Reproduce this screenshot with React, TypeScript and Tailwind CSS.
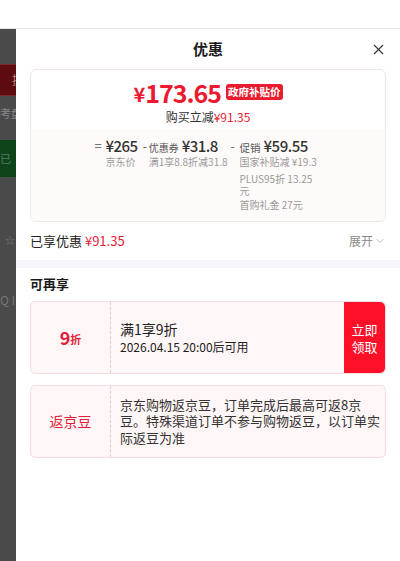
import { X, ChevronDown } from "lucide-react";

const FONT = { fontFamily: '"Noto Sans CJK SC", "Noto Sans", sans-serif' };

function Breakdown() {
  return (
    <div className="flex justify-center whitespace-nowrap bg-[#fffafa] pt-[8px] pb-[10px] text-[#333]">
      <div className="flex shrink-0">
        <span className="w-[11px] shrink-0 text-[13px] leading-[18px] text-[#555]">=</span>
        <div className="flex flex-col">
          <span className="h-[18px] text-[15px] font-medium leading-[18px] tracking-[-0.5px]">¥265</span>
          <span className="mt-[1px] text-[10px] leading-[12px] text-[#999]">京东价</span>
        </div>
      </div>
      <div className="ml-[5px] flex shrink-0">
        <span className="w-[6px] shrink-0 text-[12px] leading-[18px] text-[#555]">-</span>
        <div className="flex flex-col">
          <div className="flex h-[18px] items-baseline">
            <span className="text-[10px] leading-[18px] text-[#555]">优惠券</span>
            <span className="ml-[3px] text-[15px] font-medium leading-[18px] tracking-[-0.5px]">¥31.8</span>
          </div>
          <span className="mt-[1px] text-[10px] leading-[12px] text-[#999]">满1享8.8折减31.8</span>
        </div>
      </div>
      <div className="ml-[3px] flex shrink-0">
        <span className="w-[9px] shrink-0 text-[12px] leading-[18px] text-[#555]">-</span>
        <div className="flex w-[82px] flex-col">
          <div className="flex h-[18px] items-baseline">
            <span className="text-[10.5px] leading-[18px] text-[#555]">促销</span>
            <span className="ml-[3px] text-[15px] font-medium leading-[18px] tracking-[-0.5px]">¥59.55</span>
          </div>
          <span className="mt-[1px] text-[10px] leading-[12px] text-[#999]">国家补贴减 ¥19.3</span>
          <span className="mt-[5px] whitespace-normal text-[10px] leading-[12px] text-[#999]">PLUS95折 13.25 元</span>
          <span className="mt-[2px] text-[10px] leading-[12px] text-[#999]">首购礼金 27元</span>
        </div>
      </div>
    </div>
  );
}

export default function App() {
  return (
    <div className="flex h-[561px] w-[400px] flex-col overflow-hidden bg-white" style={FONT}>
      <div className="h-[29px] shrink-0 border-b border-[#e6e6e6] bg-white" />
      <div className="flex flex-1">
        {/* dimmed page behind the sheet */}
        <div className="flex w-[16px] shrink-0 flex-col overflow-hidden bg-[#4a4a4a]">
          <div className="mt-[35px] h-[32px] border-y border-[#7a2a2e] bg-[#5c0b0f] pl-[12px] text-[12px] leading-[30px] text-[#b88]">
            提
          </div>
          <div className="mt-[10px] whitespace-nowrap text-[11px] leading-[14px] text-[#888]">考盘</div>
          <div className="mt-[20px] h-[37px] whitespace-nowrap bg-[#0d4419] text-[11px] leading-[37px] text-[#5a7a5e]">已</div>
          <div className="mt-[56px] pl-[5px] text-[10px] leading-[14px] text-[#777]">☆</div>
          <div className="mt-[46px] whitespace-nowrap text-[12px] leading-[14px] text-[#777]">Q I</div>
        </div>

        <div className="flex flex-1 flex-col bg-white">
          <div className="relative flex h-[40px] items-center justify-center">
            <span className="text-[15px] font-bold text-[#1a1a1a]">优惠</span>
            <X className="absolute right-[13px] top-[12px] size-[17px] text-[#333]" strokeWidth={1.6} />
          </div>

          <div className="mx-[14px] overflow-hidden rounded-[6px] border border-[#f0e6e6]">
            <div className="flex flex-col items-center pt-[7px] pb-[4px]">
              <div className="flex h-[30px] items-center text-[#ec1930]">
                <span className="mt-[3px] text-[20px] font-bold leading-none">¥</span>
                <span className="text-[25px] font-bold leading-none tracking-[-1px]">173.65</span>
                <span className="ml-[5px] rounded-[3px] bg-[#e81c2e] px-[2px] text-[10.5px] font-bold leading-[16px] text-white">
                  政府补贴价
                </span>
              </div>
              <div className="mt-[2px] text-[12px] leading-[16px] text-[#333]">
                购买立减<span className="text-[#e81c2e]">¥91.35</span>
              </div>
            </div>
            <Breakdown />
          </div>

          <div className="mx-[14px] flex h-[38px] items-center justify-between">
            <span className="text-[13px] text-[#222]">
              已享优惠 <span className="text-[#e41d38]">¥91.35</span>
            </span>
            <span className="flex items-center text-[12px] text-[#888]">
              展开
              <ChevronDown className="ml-[1px] size-[12px] text-[#aaa]" strokeWidth={1.5} />
            </span>
          </div>

          <div className="h-[8px] bg-[#f5f6fa]" />

          <div className="mx-[14px] mt-[8px] text-[13px] font-bold leading-[16px] text-[#1a1a1a]">可再享</div>

          <div className="mx-[14px] mt-[9px] flex h-[73px] overflow-hidden rounded-[5px] border border-[#f3dde0] bg-[#fff6f7]">
            <div className="flex w-[80px] items-center justify-center border-r border-dashed border-[#efc8ce] text-[#e41d38]">
              <span className="text-[18px] font-bold">9</span>
              <span className="mt-[3px] text-[11px] font-bold">折</span>
            </div>
            <div className="flex flex-1 flex-col justify-center pl-[9px] text-[#222]">
              <span className="text-[14px] leading-[18px]">满1享9折</span>
              <span className="text-[12px] leading-[17px]">2026.04.15 20:00后可用</span>
            </div>
            <div className="flex w-[41px] flex-col items-center justify-center rounded-r-[5px] bg-[#ff1029] text-[13px] leading-[17px] text-white">
              <span>立即</span>
              <span>领取</span>
            </div>
          </div>

          <div className="mx-[14px] mt-[11px] flex h-[73px] overflow-hidden rounded-[5px] border border-[#f3dde0] bg-[#fff6f7]">
            <div className="flex w-[80px] shrink-0 items-center justify-center border-r border-dashed border-[#efc8ce] text-[14px] text-[#e41d38]">
              返京豆
            </div>
            <div className="flex flex-1 items-center pl-[9px] pr-[3px] text-[13px] leading-[16.5px] text-[#333]">
              京东购物返京豆，订单完成后最高可返8京豆。特殊渠道订单不参与购物返豆，以订单实际返豆为准
            </div>
          </div>

          <div className="flex-1" />
        </div>
      </div>
    </div>
  );
}
